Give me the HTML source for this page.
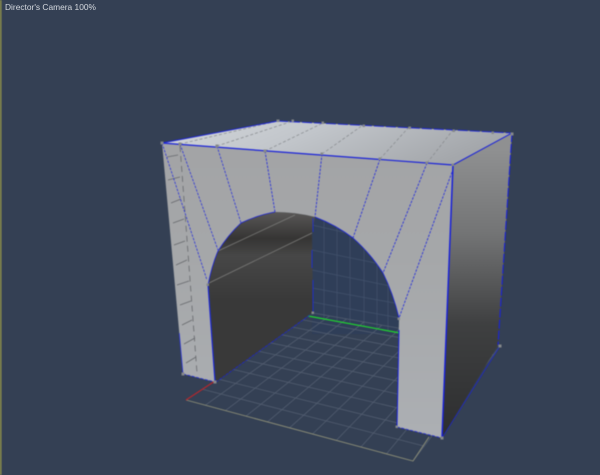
<!DOCTYPE html>
<html><head><meta charset="utf-8"><style>
html,body{margin:0;padding:0;width:600px;height:475px;overflow:hidden;background:#344054}
svg{position:absolute;left:0;top:0;filter:blur(.45px)}
.t{position:absolute;left:5px;top:1px;font:8.4px/12px "Liberation Sans",sans-serif;color:#d5d9df;white-space:nowrap}
</style></head><body>
<svg width="600" height="475" viewBox="0 0 600 475" xmlns="http://www.w3.org/2000/svg">
<defs>
<linearGradient id="top" x1="0" y1="0" x2="1" y2="0.3"><stop offset="0" stop-color="#d3d7db"/><stop offset=".45" stop-color="#c2c6cb"/><stop offset="1" stop-color="#a4a7ab"/></linearGradient>
<linearGradient id="front" x1="0" y1="143" x2="0" y2="430" gradientUnits="userSpaceOnUse"><stop offset="0" stop-color="#a3a4a6"/><stop offset=".45" stop-color="#a6a8aa"/><stop offset="1" stop-color="#acafb3"/></linearGradient>
<linearGradient id="right" x1="0" y1="150" x2="0" y2="430" gradientUnits="userSpaceOnUse"><stop offset="0" stop-color="#8f9091"/><stop offset=".3" stop-color="#737475"/><stop offset=".62" stop-color="#3f4041"/><stop offset="1" stop-color="#2e2f30"/></linearGradient>
<linearGradient id="wall" x1="0" y1="212" x2="0" y2="300" gradientUnits="userSpaceOnUse"><stop offset="0" stop-color="#595857"/><stop offset=".3" stop-color="#363534"/><stop offset=".5" stop-color="#474747"/><stop offset="1" stop-color="#393939"/></linearGradient>
</defs>
<rect x="0" y="0" width="1.5" height="475" fill="#8d8f4a"/>
<rect x="312" y="212" width="90" height="122" fill="#2f3e58"/>
<g stroke="#43526c" stroke-width=".7" fill="none">
<path d="M312 225L400 245M312 250L400 268M312 270L400 288M312 288L400 304M312 302L400 318"/>
<path d="M324 215V318M337 215V321M350 225V323M364 230V326M377 250V328M388 265V331"/>
</g>
<g id="fl" stroke="#525d70" stroke-width=".8" fill="none"></g>
<path d="M186 400L413 461L429 437" fill="none" stroke="#8f9078" stroke-width=".9"/>
<path d="M186 400L215 381" stroke="#b8262c" stroke-width="1.1"/>
<path d="M308 316L400 333" stroke="#1fd42e" stroke-width="1.2"/>

<path d="M209 283Q212 265 218 251Q228 235 241 223Q258 215 275 212Q295 212 315 217L312 233L313 312L216 382Z" fill="url(#wall)"/>
<path d="M209 283L312 233M218 251L295 215" stroke="#7d7d7b" stroke-width=".7" fill="none"/>
<path d="M313 218V232M312 250V268M313 280V312" stroke="#1d2fd0" stroke-width=".9" fill="none"/>

<polygon points="453,165 512,133 498,345 442,438" fill="url(#right)"/>
<polygon points="162,143 278,121 512,133 453,165" fill="url(#top)"/>
<path d="M162 143L453 165L442 438L397 427L399 318Q393 293 383 273Q370 253 353 238Q336 225 315 217Q295 212 275 212Q258 215 241 223Q228 235 218 251Q212 265 208 285L215 382L183 374Z" fill="url(#front)"/>

<g fill="none" stroke="#85888c" stroke-width=".7" stroke-dasharray="3 2">
<path d="M180 144L278 121M217 146L293 121M265 151L323 123M322 154L363 125M380 159L409 127M427 163L453 130"/>
</g>
<g fill="none" stroke="#66686c" stroke-width=".8">
<path d="M180 146L197 373" stroke-dasharray="6 4"/>
<path d="M167 157L178 155M168 180L180 177M171 203L181 199M173 223L184 219M174 245L185 241M176 265L187 260M177 285L189 281M180 305L191 301M182 325L192 320M184 344L195 338M186 363L196 357"/>
</g>
<g fill="none" stroke="#1a22d8" stroke-width="1.2">
<path d="M162 143L453 165"/>
<path d="M162 143L278 121" stroke-width=".9"/>
<path d="M278 121L512 133" stroke-width=".9" stroke-dasharray="10 2"/>
<path d="M453 165L512 133" stroke-width="1"/>
<path d="M453 165L442 438" stroke-width="1.5"/>
<path d="M512 133L498 345" stroke-dasharray="9 2" stroke-width="1.1"/>
<path d="M208 285Q212 265 218 251Q228 235 241 223Q258 215 275 212" stroke-width=".8"/>
<path d="M315 217Q336 225 353 238Q370 253 383 273Q393 293 399 318" stroke-width=".8"/>
<path d="M208 285L215 382" stroke-width="1.1"/>
<path d="M399 330L397 427" stroke-width="1"/>
<path d="M442 438L500 346" stroke-width=".7"/>
<path d="M183 374L215 382M397 427L442 438" stroke-width=".8" stroke-dasharray="3 1.5"/>
<path d="M216 382L310 315" stroke-width=".7" stroke-dasharray="3 1"/>
</g>
<g fill="none" stroke="#2a32d6" stroke-width=".8" stroke-dasharray="2.5 1.2">
<path d="M162 143L207 280M180 144L218 250M217 146L241 223"/>
<path d="M265 151L275 212M322 154L315 217M380 159L353 238M427 163L383 273M452 172L399 318" stroke-width=".9"/>
<path d="M162 143L183 374" stroke-dasharray="1 190 40 300"/>
</g>
<g fill="#85888a">
<rect x="160.500" y="141.500" width="3" height="3"/><rect x="178.500" y="142.500" width="3" height="3"/><rect x="215.500" y="144.500" width="3" height="3"/><rect x="263.500" y="149.500" width="3" height="3"/><rect x="320.500" y="152.500" width="2.500" height="2.500"/><rect x="378.500" y="157.500" width="2.500" height="2.500"/><rect x="425.500" y="161.500" width="2.500" height="2.500"/><rect x="451.500" y="163.500" width="2.500" height="2.500"/>
<rect x="276.500" y="119.500" width="3" height="2.500"/><rect x="291.500" y="119.500" width="2.500" height="2.500"/><rect x="321.500" y="121.500" width="2.500" height="2.500"/><rect x="362.500" y="124.500" width="2.500" height="2.500"/><rect x="408.500" y="126.500" width="2.500" height="2.500"/><rect x="452.500" y="129.500" width="2.500" height="2.500"/><rect x="491.500" y="131.500" width="2.500" height="2.500"/><rect x="510.500" y="132.500" width="3" height="3"/>
<rect x="181.500" y="372.500" width="3" height="3"/><rect x="213.500" y="380.500" width="3" height="3"/><rect x="395.500" y="425.500" width="2.500" height="2.500"/><rect x="440.500" y="436.500" width="3" height="3"/><rect x="498.500" y="344.500" width="3" height="3"/><rect x="311.500" y="311.500" width="2.500" height="2.500"/><rect x="397.500" y="317.500" width="2.500" height="2.500"/><rect x="206.500" y="283.500" width="2.500" height="2.500"/>
</g>
</svg>
<div class="t">Director's Camera 100%</div>
<script>
(function(){
var A=[186,400],B=[413,461],C=[500,346],D=[313,313],n=10,d='';
function h(u,v){
 var x0=A[0],y0=A[1],x1=B[0],y1=B[1],x2=C[0],y2=C[1],x3=D[0],y3=D[1];
 var sx=x0-x1+x2-x3,sy=y0-y1+y2-y3,dx1=x1-x2,dx2=x3-x2,dy1=y1-y2,dy2=y3-y2;
 var den=dx1*dy2-dx2*dy1,g=(sx*dy2-dx2*sy)/den,k=(dx1*sy-sx*dy1)/den;
 var a=x1-x0+g*x1,b=x3-x0+k*x3,e=y1-y0+g*y1,f=y3-y0+k*y3,w=g*u+k*v+1;
 return [((a*u+b*v+x0)/w).toFixed(1),((e*u+f*v+y0)/w).toFixed(1)];
}
for(var i=1;i<=n;i++){var t=i/n,p=h(t,0),q=h(t,1),r=h(0,t),s=h(1,t);
 d+='M'+p+'L'+q+'M'+r+'L'+s;}
var el=document.createElementNS('http://www.w3.org/2000/svg','path');el.setAttribute('d',d);
document.getElementById('fl').appendChild(el);
})();
</script>
</body></html>
